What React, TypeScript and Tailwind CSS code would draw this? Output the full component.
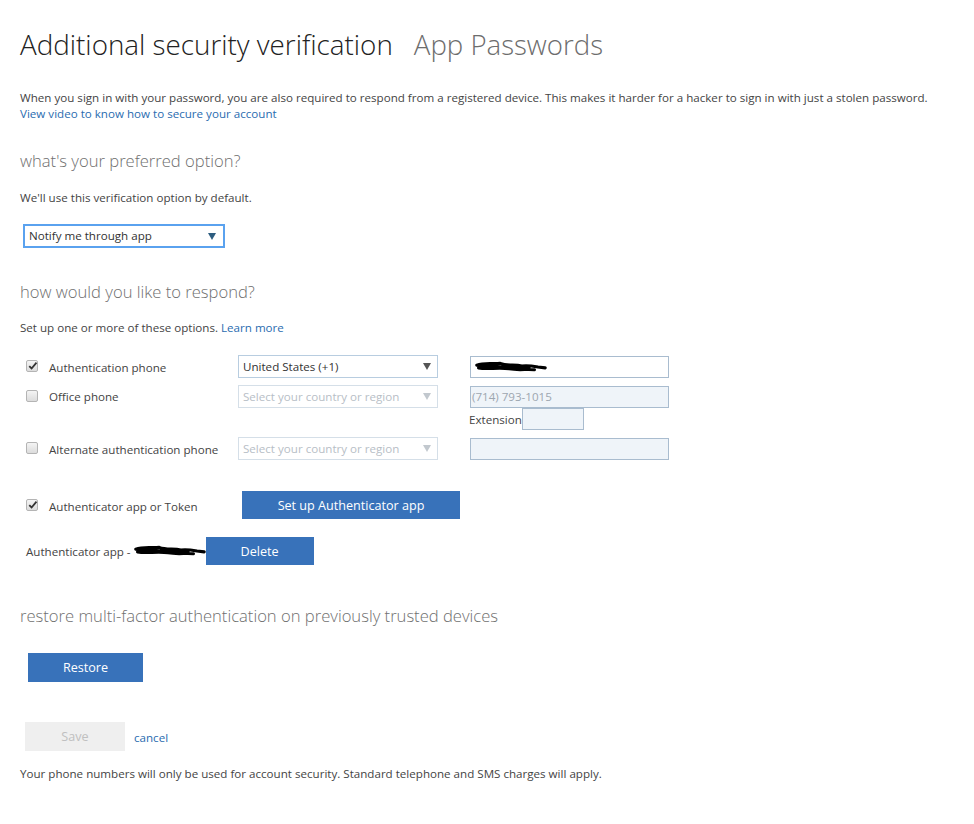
import React from "react";

const FONT = { fontFamily: '"Segoe UI", "Open Sans", "Noto Sans", sans-serif' };

function Check({ checked }: { checked?: boolean }) {
  return (
    <span className="relative inline-block h-[12px] w-[12px] shrink-0 rounded-[2px] border border-[#b4b4b4] bg-gradient-to-b from-[#f4f4f4] to-[#dcdcdc]">
      {checked && (
        <svg viewBox="0 0 12 12" className="absolute left-[1px] top-[0px] h-[10px] w-[10px]">
          <path d="M1.5 6.2 L4.3 9 L10.2 2" fill="none" stroke="#333" strokeWidth="2.2" />
        </svg>
      )}
    </span>
  );
}

function Arrow({ color }: { color: string }) {
  return (
    <svg viewBox="0 0 8 7" className="h-[7px] w-[8px]">
      <path d="M0 0 H8 L4 7 Z" fill={color} />
    </svg>
  );
}

function Select({ text, disabled }: { text: string; disabled?: boolean }) {
  return (
    <div
      className={
        "flex h-[23px] w-[200px] items-center justify-between border pl-[4px] pr-[6px] text-[11.6px] " +
        (disabled ? "border-[#d5dfe8] text-[#b7bec6]" : "border-[#b8cde0] text-[#333]")
      }
    >
      <span>{text}</span>
      <Arrow color={disabled ? "#c2c8ce" : "#555"} />
    </div>
  );
}

function Scribble({ w }: { w: number }) {
  return (
    <svg viewBox="0 0 80 12" width={w} height={12} className="block">
      <path
        d="M2 4 C10 1 20 3 28 2 C36 5 44 3 52 5 C58 4 64 5 70 6 L78 7 M4 7 C14 9 26 6 38 8 C48 10 58 8 66 9 M6 5 C20 6 40 5 60 7"
        fill="none"
        stroke="#000"
        strokeWidth="3.5"
        strokeLinecap="round"
      />
    </svg>
  );
}

export default function App() {
  return (
    <div className="min-h-[824px] w-[974px] bg-white pl-[20px] text-[#333]" style={FONT}>
      {/* title */}
      <div className="flex items-baseline gap-[21px] pt-[26px] font-light leading-[36px]">
        <h1 className="text-[27.8px] text-[#222]">Additional security verification</h1>
        <span className="text-[27.6px] text-[#6d6d6d]">App Passwords</span>
      </div>

      <p className="mt-[28px] text-[11.6px] leading-[16px] text-[#444]">
        When you sign in with your password, you are also required to respond from a registered device. This makes
        it harder for a hacker to sign in with just a stolen password.
        <br />
        <a className="text-[#2a6cb0]">View video to know how to secure your account</a>
      </p>

      <h2 className="mt-[28px] text-[16.6px] font-light leading-[21px] text-[#6f6f6f]">what's your preferred option?</h2>
      <p className="mt-[19px] text-[11.6px] leading-[16px] text-[#444]">We'll use this verification option by default.</p>

      <div className="ml-[3px] mt-[18px] flex h-[24px] w-[202px] items-center justify-between border-2 border-[#5aa2ef] pl-[4px] pr-[7px] text-[11.6px] text-[#333]">
        <span>Notify me through app</span>
        <Arrow color="#2d5d80" />
      </div>

      <h2 className="mt-[33px] text-[16.6px] font-light leading-[21px] text-[#6f6f6f]">how would you like to respond?</h2>
      <p className="mt-[18px] text-[11.6px] leading-[16px] text-[#444]">
        Set up one or more of these options. <a className="text-[#2a6cb0]">Learn more</a>
      </p>

      {/* options */}
      <div className="mt-[19px] text-[11.6px] text-[#444]">
        <div className="flex h-[23px] items-center">
          <div className="flex w-[218px] items-center gap-[11px] pl-[6px]">
            <Check checked />
            <span className="mt-[3px]">Authentication phone</span>
          </div>
          <Select text="United States (+1)" />
          <div className="ml-[32px] flex h-[22px] w-[199px] items-center border border-[#a9bccf] pl-[4px]">
            <Scribble w={72} />
          </div>
        </div>

        <div className="mt-[7px] flex h-[23px] items-center">
          <div className="flex w-[218px] items-center gap-[11px] pl-[6px]">
            <Check />
            <span>Office phone</span>
          </div>
          <Select text="Select your country or region" disabled />
          <div className="ml-[32px] flex h-[22px] w-[199px] items-center border border-[#a9bccf] bg-[#eff4f9] pl-[1px] text-[#9da6b0]">
            (714) 793-1015
          </div>
        </div>

        <div className="flex h-[22px] items-center pl-[449px]">
          <span className="mt-[1px]">Extension</span>
          <div className="h-[22px] w-[62px] border border-[#a9bccf] bg-[#eff4f9]" />
        </div>

        <div className="mt-[7px] flex h-[23px] items-center">
          <div className="flex w-[218px] items-center gap-[11px] pl-[6px]">
            <Check />
            <span className="mt-[3px]">Alternate authentication phone</span>
          </div>
          <Select text="Select your country or region" disabled />
          <div className="ml-[32px] h-[22px] w-[199px] border border-[#a9bccf] bg-[#eff4f9]" />
        </div>

        <div className="mt-[31px] flex h-[28px] items-center">
          <div className="flex w-[222px] items-center gap-[11px] pl-[6px]">
            <Check checked />
            <span className="mt-[3px]">Authenticator app or Token</span>
          </div>
          <button className="h-[28px] w-[218px] bg-[#3872ba] pt-[2px] text-[12.6px] text-white">
            Set up Authenticator app
          </button>
        </div>

        <div className="mt-[18px] flex h-[28px] items-center pl-[6px]">
          <span className="mt-[2px] whitespace-pre">Authenticator app - </span>
          <Scribble w={72} />
          <button className="h-[28px] w-[108px] bg-[#3872ba] pt-[2px] text-[12.6px] text-white">Delete</button>
        </div>
      </div>

      <h2 className="mt-[40px] text-[16.6px] font-light leading-[21px] text-[#6f6f6f]">
        restore multi-factor authentication on previously trusted devices
      </h2>

      <button className="ml-[8px] mt-[27px] h-[29px] w-[115px] bg-[#3872ba] pt-[2px] text-[12.6px] text-white">
        Restore
      </button>

      <div className="mt-[40px] flex items-center gap-[9px] pl-[5px]">
        <button className="h-[29px] w-[100px] bg-[#efefef] pt-[2px] text-[12.6px] text-[#c0c0c0]">Save</button>
        <a className="mt-[2px] text-[11.6px] text-[#2a6cb0]">cancel</a>
      </div>

      <p className="mt-[15px] text-[11.6px] leading-[16px] text-[#444]">
        Your phone numbers will only be used for account security. Standard telephone and SMS charges will apply.
      </p>
    </div>
  );
}
